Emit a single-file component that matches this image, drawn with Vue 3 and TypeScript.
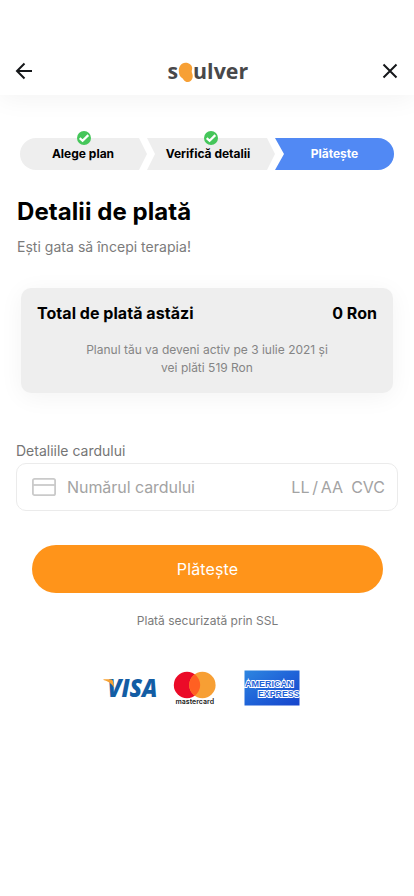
<script setup lang="ts">
interface Step {
  label: string
  done: boolean
  kind: string
}

const steps: Step[] = [
  { label: 'Alege plan', done: true, kind: 'first' },
  { label: 'Verifică detalii', done: true, kind: 'middle' },
  { label: 'Plătește', done: false, kind: 'current' },
]
</script>

<template>
  <div class="screen">
    <header class="header">
      <button class="icon-button" type="button" aria-label="Înapoi">
        <svg width="18" height="18" viewBox="0 0 18 18" fill="none" stroke="#15171a" stroke-width="2">
          <path d="M17 9H2.5M9.5 1.5L2 9L9.5 16.5" />
        </svg>
      </button>
      <svg class="brand" width="82" height="32" viewBox="0 0 82 32">
        <text class="brand-text" x="0.6" y="23.8" textLength="10.6" lengthAdjust="spacingAndGlyphs">s</text>
        <path
          class="brand-bean"
          d="M18.3 7.7C22.3 7.6 25.3 10.2 25.2 13.2C25.1 15.2 24.2 16.3 25.2 18.5C26.6 21.4 25.3 26.9 20.9 27.1C17.2 27.2 16.9 24.2 14.7 22.8C12.7 21.6 11.8 19 11.8 15.8C11.8 11.5 14.2 7.8 18.3 7.7Z"
        />
        <text class="brand-text" x="26.1" y="23.8" textLength="55" lengthAdjust="spacingAndGlyphs">ulver</text>
      </svg>
      <button class="icon-button" type="button" aria-label="Închide">
        <svg width="16" height="16" viewBox="0 0 16 16" fill="none" stroke="#15171a" stroke-width="2">
          <path d="M1.5 1.5L14.5 14.5M14.5 1.5L1.5 14.5" />
        </svg>
      </button>
    </header>

    <main class="content">
      <ol class="steps">
        <li v-for="step in steps" :key="step.label" class="step" :class="step.kind">
          <span class="step-shape">{{ step.label }}</span>
          <svg v-if="step.done" class="check" width="14" height="14" viewBox="0 0 14 14" fill="none">
            <circle cx="7" cy="7" r="7" fill="#45c65a" />
            <path d="M2.7 7.1L5.6 9.8L11.3 4.1" stroke="#fff" stroke-width="2.2" />
          </svg>
        </li>
      </ol>

      <h1 class="title">Detalii de plată</h1>
      <p class="subtitle">Ești gata să începi terapia!</p>

      <section class="summary">
        <div class="total">
          <span>Total de plată astăzi</span>
          <span>0 Ron</span>
        </div>
        <p class="note">Planul tău va deveni activ pe 3 iulie 2021 și<br />vei plăti 519 Ron</p>
      </section>

      <div class="label">Detaliile cardului</div>
      <div class="card-field">
        <svg class="card-icon" width="24" height="18" viewBox="0 0 24 18" fill="none" stroke="#cacaca" stroke-width="1.8">
          <rect x="0.9" y="0.9" width="22.2" height="16.2" rx="1.7" />
          <path d="M1 7H23" />
        </svg>
        <span class="number">Numărul cardului</span>
        <span class="expiry">LL / AA</span>
        <span class="cvc">CVC</span>
      </div>

      <button class="pay" type="button">Plătește</button>
      <p class="secure">Plată securizată prin SSL</p>

      <div class="brands">
        <svg class="visa" width="56" height="32" viewBox="0 0 56 32">
          <text class="visa-text" x="4.5" y="24.8" textLength="50" lengthAdjust="spacingAndGlyphs">VISA</text>
          <path d="M0.5 7.3H7C9 7.3 9.8 8.2 10.1 9.6L11.2 15.5C8.5 11.2 4.6 8.9 0.5 8Z" fill="#f7a233" />
        </svg>
        <svg class="mastercard" width="44" height="36" viewBox="0 0 44 36">
          <circle cx="14" cy="15" r="13.2" fill="#eb0b28" />
          <circle cx="29.4" cy="15" r="13.2" fill="#f79f34" />
          <path d="M21.7 4.3A13.2 13.2 0 0 1 21.7 25.7A13.2 13.2 0 0 1 21.7 4.3Z" fill="#ff6022" />
          <text class="mc-text" x="2.5" y="34" textLength="38.5" lengthAdjust="spacingAndGlyphs">mastercard</text>
        </svg>
        <svg class="amex" width="56" height="36" viewBox="0 0 56 36">
          <defs>
            <linearGradient id="amex-fill" x1="0" y1="0" x2="1" y2="1">
              <stop offset="0" stop-color="#2e86e0" />
              <stop offset="0.5" stop-color="#1f63d8" />
              <stop offset="1" stop-color="#1745cc" />
            </linearGradient>
          </defs>
          <rect x="0.5" y="0.5" width="55" height="35" fill="url(#amex-fill)" />
          <text class="amex-text" x="1" y="16.5" textLength="48.5" lengthAdjust="spacingAndGlyphs">AMERICAN</text>
          <text class="amex-text" x="14" y="26.8" textLength="41.5" lengthAdjust="spacingAndGlyphs">EXPRESS</text>
        </svg>
      </div>
    </main>
  </div>
</template>

<style>
body {
  margin: 0;
  background: #fff;
}
</style>

<style scoped>
.screen {
  width: 414px;
  height: 896px;
  overflow: hidden;
  background: #fff;
  font-family: Inter, "Liberation Sans", sans-serif;
  color: #000;
}

.header {
  box-sizing: border-box;
  height: 95px;
  padding: 47px 16px 0 15px;
  display: flex;
  justify-content: space-between;
  align-items: center;
  box-shadow: 0 4px 24px rgba(0, 0, 0, 0.05);
}

.icon-button,
.pay {
  border: 0;
  margin: 0;
  padding: 0;
  background: none;
  font-family: inherit;
}

.icon-button {
  display: flex;
}

.brand,
.visa,
.mastercard,
.amex {
  overflow: visible;
}

.brand-text {
  font: 700 22px "Open Sans", sans-serif;
  fill: #48484a;
}

.brand-bean {
  fill: #f7a035;
}

.content {
  padding: 43px 16px 0;
}

.steps {
  display: flex;
  list-style: none;
  margin: 0 4px;
  padding: 0;
}

.step {
  position: relative;
  height: 32px;
  font-size: 12px;
  font-weight: 700;
  text-align: center;
}

.step-shape {
  display: block;
  box-sizing: border-box;
  height: 32px;
  line-height: 32px;
  background: #eee;
}

.first {
  width: 127px;
}

.first .step-shape {
  padding-right: 1px;
  border-radius: 16px 0 0 16px;
  clip-path: polygon(0 0, 119px 0, 100% 50%, 119px 100%, 0 100%);
}

.middle {
  width: 128px;
}

.middle .step-shape {
  padding-right: 6px;
  clip-path: polygon(0 0, 120px 0, 100% 50%, 120px 100%, 0 100%, 8px 50%);
}

.current {
  width: 119px;
  color: #fff;
}

.current .step-shape {
  border-radius: 0 16px 16px 0;
  background: #5189f4;
  clip-path: polygon(0 0, 100% 0, 100% 100%, 0 100%, 9px 50%);
}

.check {
  position: absolute;
  top: -7px;
  left: 57px;
}

.title {
  margin: 26px 1px 0;
  font-size: 24px;
  line-height: 32px;
  font-weight: 700;
  letter-spacing: 0.07px;
}

.subtitle {
  margin: 9px 1px 0;
  font-size: 14px;
  line-height: 20px;
  letter-spacing: 0.03px;
  color: #7b7b7b;
}

.summary {
  box-sizing: border-box;
  height: 105px;
  margin: 31px 5px 0;
  padding: 14px 16px 0;
  border-radius: 10px;
  background: #eee;
  box-shadow: 0 4px 24px rgba(0, 0, 0, 0.05);
}

.total {
  display: flex;
  justify-content: space-between;
  font-size: 16px;
  line-height: 22px;
  font-weight: 700;
  letter-spacing: 0.04px;
}

.note {
  margin: 17px 0 0;
  font-size: 12px;
  line-height: 18px;
  text-align: center;
  color: #858585;
}

.label {
  margin-top: 48px;
  font-size: 14px;
  line-height: 20px;
  color: #757575;
}

.card-field {
  box-sizing: border-box;
  height: 48px;
  margin-top: 2px;
  padding: 0 12px 0 15px;
  display: flex;
  align-items: center;
  border: 1px solid #ebebeb;
  border-radius: 10px;
  font-size: 16px;
  color: #a3a3a3;
}

.number {
  margin-left: 11px;
  letter-spacing: -0.06px;
}

.expiry {
  margin-left: auto;
  word-spacing: -1.7px;
}

.cvc {
  margin-left: 8px;
}

.pay {
  display: block;
  width: 351px;
  height: 48px;
  margin: 34px 16px 0;
  border-radius: 24px;
  background: #ff941a;
  font-size: 16px;
  letter-spacing: 0.12px;
  color: #fff;
}

.secure {
  margin: 19px 0 0;
  font-size: 12px;
  line-height: 18px;
  text-align: center;
  text-indent: 1px;
  color: #7b7b7b;
}

.brands {
  display: flex;
  align-items: center;
  margin: 40px 0 0 87px;
}

.mastercard {
  margin-left: 14px;
}

.amex {
  margin-left: 27px;
}

.visa-text {
  font: italic 800 24.5px "Open Sans", sans-serif;
  fill: #135da4;
}

.mc-text {
  font: 600 7px Inter, sans-serif;
  fill: #222;
}

.amex-text {
  font: 700 9.8px "Liberation Sans", sans-serif;
  fill: #1f63d8;
  stroke: #fff;
  stroke-width: 2px;
  paint-order: stroke;
}
</style>
